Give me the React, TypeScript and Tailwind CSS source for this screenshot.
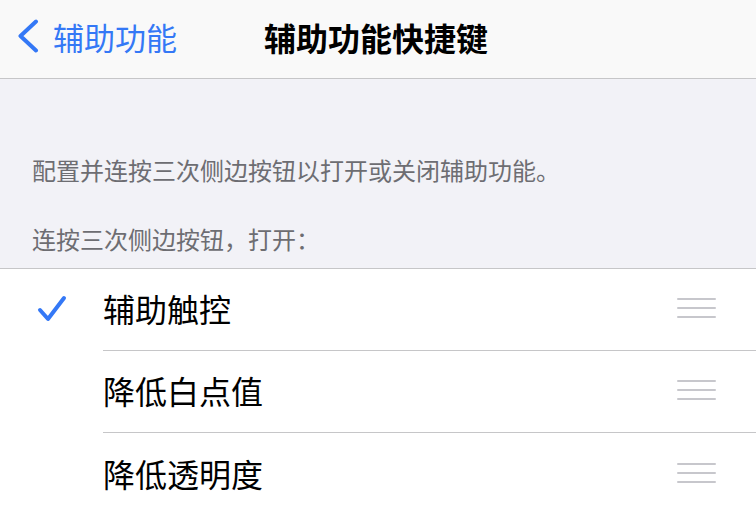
import React from 'react';

const items = ['辅助触控', '降低白点值', '降低透明度'];

const Chevron = () => (
  <svg width="22" height="34" viewBox="0 0 22 34" fill="none">
    <path d="M19 2.5 L3.5 17 L19 31.5" stroke="#3478f6" strokeWidth="4" strokeLinecap="round" strokeLinejoin="round" />
  </svg>
);

const Check = () => (
  <svg width="30" height="28" viewBox="0 0 30 28" fill="none">
    <path d="M3 15 L11 24 L27 3" stroke="#3478f6" strokeWidth="4" strokeLinecap="round" strokeLinejoin="round" />
  </svg>
);

const Handle = () => (
  <div className="flex flex-col gap-[7px] w-[39px]">
    <div className="h-[2px] bg-[#c7c7cc] rounded-full" />
    <div className="h-[2px] bg-[#c7c7cc] rounded-full" />
    <div className="h-[2px] bg-[#c7c7cc] rounded-full" />
  </div>
);

export default function App() {
  return (
    <div
      className="w-[756px] h-[512px] overflow-hidden bg-white flex flex-col"
      style={{ fontFamily: '"Noto Sans CJK SC", "Noto Sans", sans-serif' }}
    >
      <header className="h-[79px] shrink-0 bg-[#f9f9f9] border-b border-[#c6c6c8] flex items-center pb-[6px] relative">
        <div className="flex items-center pl-[17px] gap-[14px]">
          <Chevron />
          <span className="text-[31px] text-[#3478f6] leading-none">辅助功能</span>
        </div>
        <span className="absolute left-[264px] top-[21px] text-[32px] font-semibold text-black leading-none">辅助功能快捷键</span>
      </header>
      <section className="h-[190px] shrink-0 bg-[#f2f2f7] border-b border-[#c6c6c8] flex flex-col justify-end pl-[32px] pb-[13px] text-[24px] text-[#6d6d72] leading-[32px]">
        <p>配置并连按三次侧边按钮以打开或关闭辅助功能。</p>
        <p className="mt-[37px]">连按三次侧边按钮，打开：</p>
      </section>
      <ul className="bg-white">
        {items.map((label, i) => (
          <li key={label} className="flex items-center h-[82px]">
            <div className="w-[103px] shrink-0 flex justify-start pl-[37px] pb-[2px]">{i === 0 && <Check />}</div>
            <div className={`flex-1 h-full flex items-center justify-between pr-[40px] pb-[3px] ${i < items.length - 1 ? 'border-b border-[#c6c6c8]' : ''}`}>
              <span className="text-[32px] text-black leading-none">{label}</span>
              <Handle />
            </div>
          </li>
        ))}
      </ul>
    </div>
  );
}
